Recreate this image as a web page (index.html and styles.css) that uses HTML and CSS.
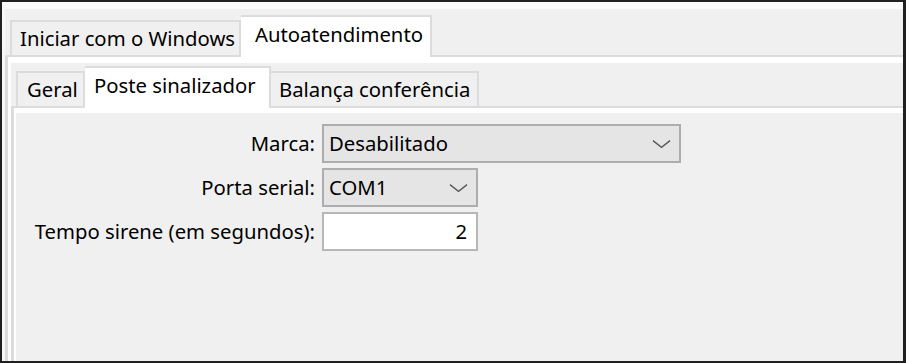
FILE: index.html
```html
<!DOCTYPE html>
<html lang="pt">
<head>
<meta charset="utf-8">
<title>Autoatendimento</title>
<link rel="stylesheet" href="styles.css">
</head>
<body>
<div class="window">
  <div class="tabs outer-tabs">
    <div class="tab outer-tab">Iniciar com o Windows</div>
    <div class="tab outer-tab active">Autoatendimento</div>
  </div>
  <div class="outer-pane">
    <div class="outer-body">
      <div class="tabs inner-tabs">
        <div class="tab inner-tab geral">Geral</div>
        <div class="tab inner-tab active">Poste sinalizador</div>
        <div class="tab inner-tab balanca">Balança conferência</div>
      </div>
      <div class="inner-pane">
        <div class="form">
          <label class="label">Marca:</label>
          <div class="combo combo-wide"><span>Desabilitado</span><svg class="chev" viewBox="0 0 20 10" width="19" height="10"><path d="M1 1.5 L10 8.5 L19 1.5" fill="none" stroke="#5a5a5a" stroke-width="1.5"/></svg></div>
          <label class="label">Porta serial:</label>
          <div class="combo combo-narrow"><span>COM1</span><svg class="chev" viewBox="0 0 20 10" width="19" height="10"><path d="M1 1.5 L10 8.5 L19 1.5" fill="none" stroke="#5a5a5a" stroke-width="1.5"/></svg></div>
          <label class="label">Tempo sirene (em segundos):</label>
          <div class="input">2</div>
        </div>
      </div>
    </div>
  </div>
</div>
</body>
</html>
```
FILE: styles.css
```css
html, body {
  margin: 0;
  padding: 0;
  background: #202020;
}
body {
  width: 906px;
  height: 363px;
  overflow: hidden;
  font-family: "Noto Sans", "Open Sans", sans-serif;
  font-size: 20.3px;
  color: #000;
}
.window {
  margin: 2px 3px 2px 2px;
  height: 359px;
  box-sizing: border-box;
  background: #f0f0f0;
  border-top: 7px solid #fbfbfb;
  border-left: 3px solid #f7f7f7;
  overflow: hidden;
}
.tabs {
  display: flex;
  align-items: flex-end;
  position: relative;
  z-index: 1;
}
.outer-tabs {
  height: 46px;
  padding-left: 5px;
}
.tab {
  box-sizing: border-box;
  border: 2px solid #dcdcdc;
  border-bottom: none;
  background: #f0f0f0;
  white-space: nowrap;
  line-height: 24px;
}
.outer-tab {
  height: 35px;
  padding: 4px 0 0 8px;
  width: 231px;
}
.outer-tab.active {
  height: 42px;
  width: 191px;
  background: #fff;
  padding: 5px 0 0 14px;
  margin-bottom: -2px;
  border-left: none;
}
.outer-pane {
  border-top: 2px solid #dcdcdc;
  border-left: 3px solid #dcdcdc;
  height: 320px;
  box-sizing: border-box;
  position: relative;
  z-index: 0;
}
.outer-body {
  border-top: 6px solid #fff;
  border-left: 3px solid #fff;
  height: 100%;
  box-sizing: border-box;
}
.inner-tabs {
  height: 43px;
  padding-left: 5px;
}
.inner-tab {
  height: 35px;
  padding: 4px 0 0 9px;
}
.inner-tab.geral { width: 69px; }
.inner-tab.balanca { width: 208px; border-left: none; padding-left: 8px; }
.inner-tab.active {
  height: 42px;
  width: 186px;
  background: #fff;
  padding: 5px 0 0 9px;
  margin-bottom: -2px;
  border-left: none;
}
.inner-pane {
  border-top: 2px solid #dcdcdc;
  border-left: 3px solid #dcdcdc;
  height: 260px;
  box-sizing: border-box;
}
.form {
  border-top: 5px solid #fff;
  border-left: 2px solid #fff;
  height: 100%;
  box-sizing: border-box;
  padding-top: 11px;
  display: grid;
  grid-template-columns: 299px auto;
  grid-auto-rows: 39px;
  row-gap: 5px;
  column-gap: 7px;
  align-content: start;
  justify-items: start;
}
.label {
  justify-self: end;
  align-self: center;
  line-height: 24px;
  padding-bottom: 2px;
}
.combo {
  box-sizing: border-box;
  height: 39px;
  background: #e5e5e5;
  border: 2px solid #adadad;
  display: flex;
  align-items: center;
  justify-content: space-between;
  padding: 0 8px 0 5px;
}
.combo span { line-height: 24px; padding-bottom: 2px; }
.combo-wide { width: 359px; }
.combo-narrow { width: 156px; }
.chev { display: block; }
.input {
  box-sizing: border-box;
  height: 39px;
  width: 156px;
  background: #fff;
  border: 2px solid #b7b7b7;
  text-align: right;
  padding: 5px 9px 0 0;
  line-height: 24px;
}
```
